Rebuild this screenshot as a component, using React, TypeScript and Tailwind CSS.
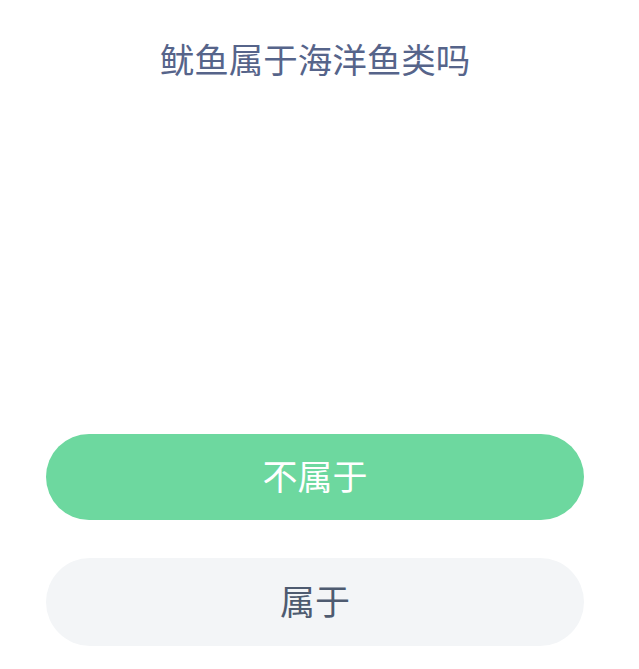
export default function App() {
  return (
    <div
      className="w-[639px] h-[669px] bg-white flex flex-col pl-[46px] pr-[55px]"
      style={{ fontFamily: '"Noto Sans CJK SC", "Noto Sans", sans-serif' }}
    >
      <h1 className="mt-[36px] text-center text-[34.5px] leading-[44px] text-[#56648a]">
        鱿鱼属于海洋鱼类吗
      </h1>
      <div className="mt-auto pb-[23px] flex flex-col gap-[38px]">
        <button className="h-[86px] w-full rounded-full bg-[#6dd89f] pb-1 text-white text-[35px]">
          不属于
        </button>
        <button className="h-[88px] w-full rounded-full bg-[#f3f5f7] pb-1 text-[#4e5b70] text-[35px]">
          属于
        </button>
      </div>
    </div>
  )
}
